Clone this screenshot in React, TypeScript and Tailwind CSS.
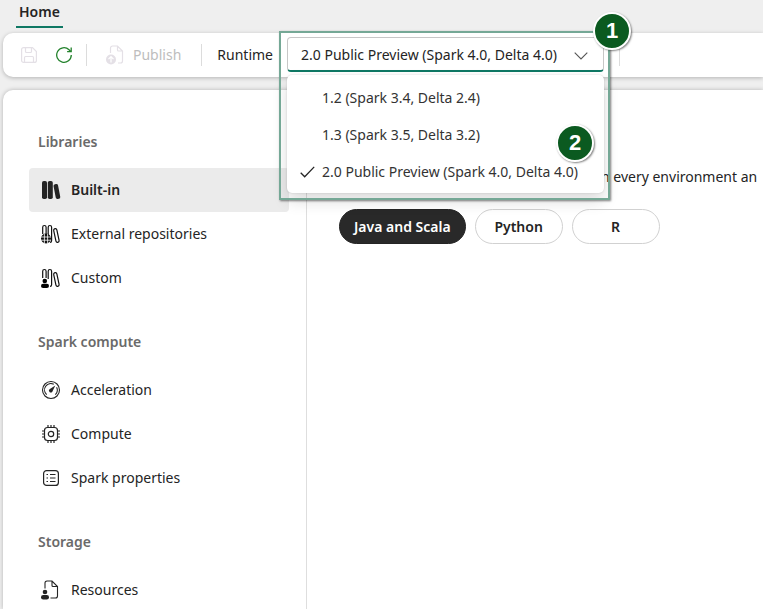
import { useState } from "react";
import type { ReactNode } from "react";

type NavItem = {
  label: string;
  icon: ReactNode;
};

type NavGroup = {
  title: string;
  items: NavItem[];
};

const runtimes = [
  "1.2 (Spark 3.4, Delta 2.4)",
  "1.3 (Spark 3.5, Delta 3.2)",
  "2.0 Public Preview (Spark 4.0, Delta 4.0)",
];

const languages = ["Java and Scala", "Python", "R"];

const SaveIcon = () => (
  <svg className="size-4" viewBox="0 0 16 16" fill="none" stroke="currentColor" strokeWidth="1.2">
    <path d="M2.600.6h8.900l3.900 3.900v8.900a2 2 0 0 1-2 2H2.600a2 2 0 0 1-2-2V2.600a2 2 0 0 1 2-2Z" />
    <path d="M4.500.5v4a1 1 0 0 0 1 1h4a1 1 0 0 0 1-1v-4M3.500 15.500v-5a1 1 0 0 1 1-1h7a1 1 0 0 1 1 1v5" />
  </svg>
);

const RefreshIcon = () => (
  <svg className="size-4" viewBox="0 0 16 16" fill="none" stroke="currentColor" strokeWidth="1.3">
    <path d="M15.300 8A7.300 7.300 0 1 1 13 2.700l1.900 1.800" />
    <path d="M15.200.6v4h-4.100" />
  </svg>
);

const PublishIcon = () => (
  <svg className="h-5 w-[18px]" viewBox="0 0 18 20" fill="none" stroke="currentColor" strokeWidth="1.2">
    <path d="M4.500 8V3a2 2 0 0 1 2-2h5l5 5v10a2 2 0 0 1-2 2H12M11.500 1v4a1 1 0 0 0 1 1h4" />
    <circle cx="5" cy="14.500" r="5" fill="currentColor" stroke="none" />
    <path d="M5 17.500v-5.500M2.500 14.200 5 11.700l2.500 2.500" stroke="white" />
  </svg>
);

const BuiltInIcon = () => (
  <svg className="size-5" viewBox="0 0 20 20" fill="#242424">
    <rect x="1" y="1" width="5" height="18" rx="1.800" />
    <rect x="6.800" y="1" width="5" height="18" rx="1.800" />
    <rect x="13.500" y="4" width="4.600" height="15" rx="1.800" transform="rotate(-11 16 11)" />
  </svg>
);

const BookOutlines = () => (
  <>
    <path d="M2.700 10V3.200a1.700 1.700 0 0 1 3.400 0V10" />
    <path d="M8.200 11V3.200a1.700 1.700 0 0 1 3.400 0v13.600a1.600 1.600 0 0 1-1.600 1.600" />
    <rect x="14.800" y="4.500" width="3.200" height="14" rx="1.600" transform="rotate(-12 16.400 11.500)" />
  </>
);

const ExternalIcon = () => (
  <svg className="size-5" viewBox="1 0 20 20" fill="none" stroke="#111" strokeWidth="1.2">
    <BookOutlines />
    <circle cx="6" cy="14.500" r="5" fill="#111" stroke="none" />
    <path d="M1 13h10M1 16.200h10M4.400 9.800v9.400M7.600 9.800v9.400" stroke="white" strokeWidth="0.8" />
  </svg>
);

const CustomIcon = () => (
  <svg className="size-5" viewBox="2 0 20 20" fill="none" stroke="#111" strokeWidth="1.2">
    <g transform="translate(1 0)">
      <BookOutlines />
    </g>
    <circle cx="5.800" cy="13" r="2.300" fill="black" stroke="none" />
    <rect x="2" y="15.800" width="8" height="4.200" rx="2.100" fill="black" stroke="none" />
  </svg>
);

const GaugeIcon = () => (
  <svg className="size-5" viewBox="0 0 20 20" fill="none" stroke="#242424" strokeWidth="1.1">
    <circle cx="10" cy="10" r="8.500" />
    <path d="M5.700 14.600A6.300 6.300 0 0 1 12.800 4.300M15.600 7.200a6.300 6.300 0 0 1-1.300 7.400" />
    <path d="M14.300 5.400 8.500 9.200a1.900 1.900 0 1 0 2.700 2.700Z" fill="#242424" stroke="none" />
  </svg>
);

const ChipIcon = () => (
  <svg className="size-5" viewBox="0 0 20 20" fill="none" stroke="#242424" strokeWidth="1.200">
    <rect x="3.500" y="3.500" width="13" height="13" rx="3" />
    <circle cx="10" cy="10" r="2.700" />
    <path d="M7 1v2.500M10 1v2.500M13 1v2.500M7 16.500V19M10 16.500V19M13 16.500V19M1 7h2.500M1 10h2.500M1 13h2.500M16.500 7H19M16.500 10H19M16.500 13H19" />
  </svg>
);

const PropertiesIcon = () => (
  <svg className="size-5" viewBox="0 0 20 20" fill="none" stroke="#242424" strokeWidth="1.200">
    <rect x="2.600" y="2.600" width="14.800" height="14.800" rx="3" />
    <path d="M5.500 6.500H7M5.500 10H7M5.500 13.500H7M9 6.500h5.500M9 10h5.500M9 13.500h5.500" />
  </svg>
);

const ResourcesIcon = () => (
  <svg className="size-5" viewBox="0 0 20 20" fill="none" stroke="#242424" strokeWidth="1.100">
    <path d="M4 8.500V3a2 2 0 0 1 2-2h5l5.500 5.500V16a2 2 0 0 1-2 2H9.500M11 1v4.500a1 1 0 0 0 1 1h4.500" />
    <circle cx="4" cy="12" r="2.300" fill="#242424" stroke="none" />
    <rect x="0" y="15" width="8" height="4.500" rx="2.250" fill="#242424" stroke="none" />
  </svg>
);

const groups: NavGroup[] = [
  {
    title: "Libraries",
    items: [
      { label: "Built-in", icon: <BuiltInIcon /> },
      { label: "External repositories", icon: <ExternalIcon /> },
      { label: "Custom", icon: <CustomIcon /> },
    ],
  },
  {
    title: "Spark compute",
    items: [
      { label: "Acceleration", icon: <GaugeIcon /> },
      { label: "Compute", icon: <ChipIcon /> },
      { label: "Spark properties", icon: <PropertiesIcon /> },
    ],
  },
  {
    title: "Storage",
    items: [{ label: "Resources", icon: <ResourcesIcon /> }],
  },
];

const Divider = () => <span className="h-[22px] w-px shrink-0 bg-[#dcdcdc]" />;

const StepBadge = ({ step, className }: { step: number; className: string }) => (
  <span
    className={`absolute z-30 flex size-[38px] items-center justify-center rounded-full border-2 border-white bg-[#0b5a20] font-['Liberation_Sans',sans-serif] text-[22px] font-bold text-white shadow-[1px_1px_2px_rgba(0,0,0,0.5)] ${className}`}
  >
    {step}
  </span>
);

const RuntimePicker = () => {
  const [open, setOpen] = useState(true);
  const [runtime, setRuntime] = useState(runtimes[2]);

  return (
    <div className="relative mt-1 w-[317px] shrink-0 self-start">
      <select
        id="runtime"
        value={runtime}
        onChange={(e) => setRuntime(e.target.value)}
        onMouseDown={(e) => {
          e.preventDefault();
          setOpen(!open);
        }}
        className="block h-[35px] w-full appearance-none rounded-[4px] border border-b-2 border-[#c7c7c7] border-b-[#0f7864] bg-white pt-[2px] pr-8 pl-[13px] outline-none"
      >
        {runtimes.map((name) => (
          <option key={name}>{name}</option>
        ))}
      </select>
      <svg
        className="pointer-events-none absolute top-[15px] right-4 h-2 w-[14px]"
        viewBox="0 0 14 8"
        fill="none"
        stroke="#555"
        strokeWidth="1.1"
      >
        <path d="m.7.7 6.300 6.300L13.300.7" />
      </svg>
      {open && (
        <ul className="absolute top-[38px] left-0 z-10 w-full rounded-[5px] bg-white pt-1 pb-[3px] shadow-[0_8px_16px_rgba(0,0,0,0.14),0_0_2px_rgba(0,0,0,0.16)]">
          {runtimes.map((name) => (
            <li key={name}>
              <button
                type="button"
                onClick={() => {
                  setRuntime(name);
                  setOpen(false);
                }}
                className="flex h-[37px] w-full items-center gap-[7px] pl-[13px] whitespace-nowrap text-[#333]"
              >
                <svg className="h-3 w-[15px]" viewBox="0 0 15 12" fill="none" stroke="#242424" strokeWidth="1.3">
                  {name === runtime && <path d="m.7 6.700 4 4L14.200.9" />}
                </svg>
                {name}
              </button>
            </li>
          ))}
        </ul>
      )}
      <div className="pointer-events-none absolute -top-[6px] -right-[6px] -left-2 z-20 h-[169px] border-2 border-[#75a896] shadow-[1px_1px_2px_rgba(0,0,0,0.5)]" />
      <StepBadge step={1} className="-top-[25px] -right-[27px]" />
      <StepBadge step={2} className="top-[87px] right-[10px]" />
    </div>
  );
};

const App: React.FC = () => {
  const [current, setCurrent] = useState("Built-in");
  const [language, setLanguage] = useState(languages[0]);

  return (
    <div className="flex h-screen flex-col overflow-hidden bg-[#efefef] pl-[3px] font-['Noto_Sans',sans-serif] text-[14px] leading-5 text-[#242424]">
      <nav className="flex h-[33px] shrink-0 items-start pl-[13px]">
        <a href="#home" className="h-7 border-b-2 border-[#0f7864] px-[3px] pt-[2px] font-semibold">
          Home
        </a>
      </nav>

      <header className="relative z-10 flex h-11 shrink-0 items-center rounded-l-[10px] bg-white pl-[18px] shadow-[0_1px_4px_rgba(0,0,0,0.25)]">
        <button type="button" disabled aria-label="Save" className="mr-[19px] text-[#e4e0e6]">
          <SaveIcon />
        </button>
        <button type="button" aria-label="Refresh" className="mr-[14px] text-[#23822c]">
          <RefreshIcon />
        </button>
        <Divider />
        <button type="button" disabled className="mr-5 ml-[19px] flex items-center gap-[9px] text-[#bdbdbd]">
          <span className="text-[#e4e0e6]">
            <PublishIcon />
          </span>
          Publish
        </button>
        <Divider />
        <label htmlFor="runtime" className="mr-[14px] ml-[15px]">
          Runtime
        </label>
        <RuntimePicker />
        <span className="w-[15px] shrink-0" />
        <Divider />
      </header>

      <main className="mt-[13px] flex min-h-0 flex-1 rounded-tl-[10px] bg-white shadow-[0_0_4px_rgba(0,0,0,0.25)]">
        <aside className="flex w-[304px] shrink-0 flex-col gap-8 border-r border-[#dedede] pt-[42px] pr-[17px] pl-[26px]">
          {groups.map((group) => (
            <section key={group.title}>
              <h2 className="mb-4 pl-[9px] font-semibold text-[#6a6a6a]">{group.title}</h2>
              {group.items.map((item) => (
                <button
                  key={item.label}
                  type="button"
                  onClick={() => setCurrent(item.label)}
                  className={`flex h-11 w-full items-center gap-[10px] rounded-[4px] pl-3 ${
                    item.label === current ? "bg-[#ebebeb] font-semibold" : ""
                  }`}
                >
                  {item.icon}
                  {item.label}
                </button>
              ))}
            </section>
          ))}
        </aside>

        <section className="min-w-0 flex-1 overflow-hidden pt-[77px] pl-8">
          <p className="pl-[262px] whitespace-nowrap">n every environment an</p>
          <div className="mt-[22px] flex gap-[9px]">
            {languages.map((name) => (
              <button
                key={name}
                type="button"
                onClick={() => setLanguage(name)}
                className={`h-[35px] min-w-[88px] rounded-full border px-[14px] font-semibold ${
                  name === language
                    ? "border-[#242424] bg-[#292929] text-white"
                    : "border-[#d1d1d1] bg-white"
                }`}
              >
                {name}
              </button>
            ))}
          </div>
        </section>
      </main>
    </div>
  );
};

export default App;
